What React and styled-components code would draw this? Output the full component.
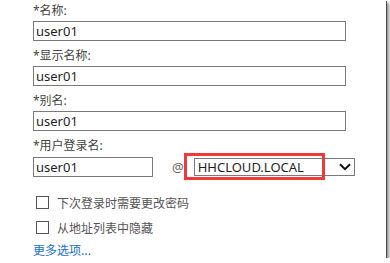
import React from "react";
import styled, { createGlobalStyle } from "styled-components";

const Global = createGlobalStyle`
  html, body { margin: 0; padding: 0; background: #fff; }
  body { font-family: "Noto Sans", "Noto Sans CJK SC", sans-serif; }
`;

const Frame = styled.div`
  width: 386px;
  height: 258px;
  box-sizing: border-box;
  background: #fff;
  box-shadow: 1px 1px 0 #4a4a4a, 3px 3px 3px rgba(0, 0, 0, 0.45);
  padding: 0 0 0 33px;
  display: flex;
  flex-direction: column;
`;

const Field = styled.div`
  display: flex;
  flex-direction: column;
  margin-bottom: ${(p) => p.$mb ?? 4}px;
`;

const Label = styled.div`
  height: ${(p) => p.$h ?? 21}px;
  line-height: ${(p) => p.$h ?? 21}px;
  font-size: 12px;
  color: #444;
  font-family: "Noto Sans", "Noto Sans CJK SC", sans-serif;
`;

const TextBox = styled.div`
  box-sizing: border-box;
  width: ${(p) => p.$w}px;
  height: 20px;
  border: 1px solid #7a7a7a;
  padding-left: 2px;
  font-size: 13px;
  line-height: 18px;
  color: #1e1e1e;
  font-family: "Noto Sans", sans-serif;
`;

const LoginRow = styled.div`
  position: relative;
  display: flex;
  align-items: center;
  height: 20px;
`;

const At = styled.span`
  margin: 0 10px 0 19px;
  font-size: 13px;
  color: #666;
  font-family: "Noto Sans", sans-serif;
`;

const Select = styled.div`
  box-sizing: border-box;
  width: 161px;
  height: 18px;
  border: 1px solid #7a7a7a;
  display: flex;
  align-items: center;
  justify-content: space-between;
  padding: 0 3px 0 3px;
  font-size: 13px;
  color: #1e1e1e;
  font-family: "Noto Sans", sans-serif;
`;

const Highlight = styled.div`
  position: absolute;
  left: 151px;
  top: -4px;
  width: 141px;
  height: 27px;
  box-sizing: border-box;
  border: 3px solid #ee3a3a;
  pointer-events: none;
`;

const Options = styled.div`
  display: flex;
  flex-direction: column;
  gap: 12px;
  margin-top: 19px;
  padding-left: 3px;
`;

const CheckRow = styled.label`
  display: flex;
  align-items: center;
  height: 13px;
  font-size: 12px;
  color: #555;
  font-family: "Noto Sans CJK SC", sans-serif;
`;

const Box = styled.span`
  box-sizing: border-box;
  width: 13px;
  height: 13px;
  border: 1px solid #555;
  margin-right: 8px;
  background: #fff;
`;

const MoreLink = styled.a`
  margin-top: 8px;
  font-size: 12px;
  color: #1a6fc8;
  text-decoration: none;
  font-family: "Noto Sans CJK SC", sans-serif;
  line-height: 16px;
`;

const Chevron = () => (
  <svg width="12" height="8" viewBox="0 0 12 8">
    <path d="M1 1.2 L6 6.2 L11 1.2" fill="none" stroke="#111" strokeWidth="2" />
  </svg>
);

export default function App() {
  return (
    <>
      <Global />
      <Frame>
        <Field>
          <Label>*名称:</Label>
          <TextBox $w={313}>user01</TextBox>
        </Field>
        <Field>
          <Label>*显示名称:</Label>
          <TextBox $w={313}>user01</TextBox>
        </Field>
        <Field>
          <Label>*别名:</Label>
          <TextBox $w={313}>user01</TextBox>
        </Field>
        <Field $mb={0}>
          <Label $h={22}>*用户登录名:</Label>
          <LoginRow>
            <TextBox $w={120}>user01</TextBox>
            <At>@</At>
            <Select>
              <span>HHCLOUD.LOCAL</span>
              <Chevron />
            </Select>
            <Highlight />
          </LoginRow>
        </Field>
        <Options>
          <CheckRow>
            <Box />
            下次登录时需要更改密码
          </CheckRow>
          <CheckRow>
            <Box />
            从地址列表中隐藏
          </CheckRow>
        </Options>
        <MoreLink href="#">更多选项...</MoreLink>
      </Frame>
    </>
  );
}
